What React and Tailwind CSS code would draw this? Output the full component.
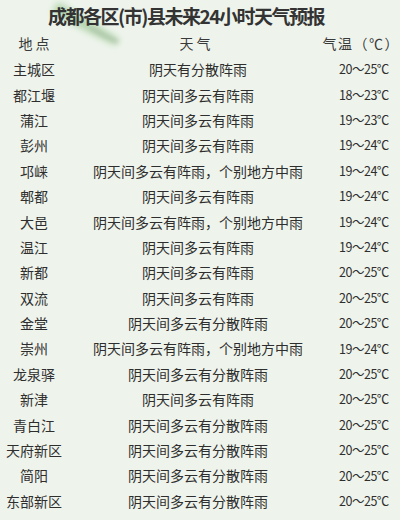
import React from "react";

const rows = [
  ["主城区", "阴天有分散阵雨", "20～25℃"],
  ["都江堰", "阴天间多云有阵雨", "18～23℃"],
  ["蒲江", "阴天间多云有阵雨", "19～23℃"],
  ["彭州", "阴天间多云有阵雨", "19～24℃"],
  ["邛崃", "阴天间多云有阵雨，个别地方中雨", "19～24℃"],
  ["郫都", "阴天间多云有阵雨", "19～24℃"],
  ["大邑", "阴天间多云有阵雨，个别地方中雨", "19～24℃"],
  ["温江", "阴天间多云有阵雨", "19～24℃"],
  ["新都", "阴天间多云有阵雨", "20～25℃"],
  ["双流", "阴天间多云有阵雨", "20～25℃"],
  ["金堂", "阴天间多云有分散阵雨", "20～25℃"],
  ["崇州", "阴天间多云有阵雨，个别地方中雨", "19～24℃"],
  ["龙泉驿", "阴天间多云有分散阵雨", "20～25℃"],
  ["新津", "阴天间多云有阵雨", "20～25℃"],
  ["青白江", "阴天间多云有分散阵雨", "20～25℃"],
  ["天府新区", "阴天间多云有分散阵雨", "20～25℃"],
  ["简阳", "阴天间多云有分散阵雨", "20～25℃"],
  ["东部新区", "阴天间多云有分散阵雨", "20～25℃"],
];

const font = { fontFamily: '"Noto Sans CJK SC", "Liberation Sans", sans-serif' };

const App = () => {
  return (
    <div
      className="relative w-[400px] h-[520px] overflow-hidden bg-[#eef4ec] text-[#333]"
      style={font}
    >
      {/* brush stroke decoration */}
      <svg className="absolute left-0 top-0" width="160" height="60" viewBox="0 0 160 60">
        <defs>
          <filter id="blur" x="-50%" y="-50%" width="200%" height="200%">
            <feGaussianBlur stdDeviation="3.5" />
          </filter>
          <filter id="blur2" x="-50%" y="-50%" width="200%" height="200%">
            <feGaussianBlur stdDeviation="2" />
          </filter>
        </defs>
        <path d="M58 2 C78 14 96 24 120 40 L115 45 C92 34 72 24 52 12 Z" fill="#b2d4ab" opacity="1" filter="url(#blur)" />
        <path d="M90 28 C100 33 109 38 118 42" stroke="#a3b3a0" strokeWidth="3" fill="none" opacity="0.6" filter="url(#blur2)" />
      </svg>

      <div className="relative">
        <div className="h-[30px] flex items-center justify-center pr-[28px] text-[19px] tracking-[-1.5px] font-bold leading-none text-[#333]">
          成都各区(市)县未来24小时天气预报
        </div>

        <div className="flex items-center h-[27px] text-[14px] text-[#3a3a3a]">
          <div className="w-[68px] text-center">地 点</div>
          <div className="w-[254px] text-center">天 气</div>
          <div className="flex-1 text-right tracking-[1.5px]">气温（℃）</div>
        </div>

        {rows.map(([place, weather, temp]) => (
          <div key={place} className="flex items-center h-[25.4px] text-[14px] text-[#2e2e2e]">
            <div className="w-[68px] text-center">{place}</div>
            <div className="w-[260px] text-center">{weather}</div>
            <div className="flex-1 text-center text-[12.5px] tracking-[-0.5px]">{temp}</div>
          </div>
        ))}
      </div>
    </div>
  );
};

export default App;
